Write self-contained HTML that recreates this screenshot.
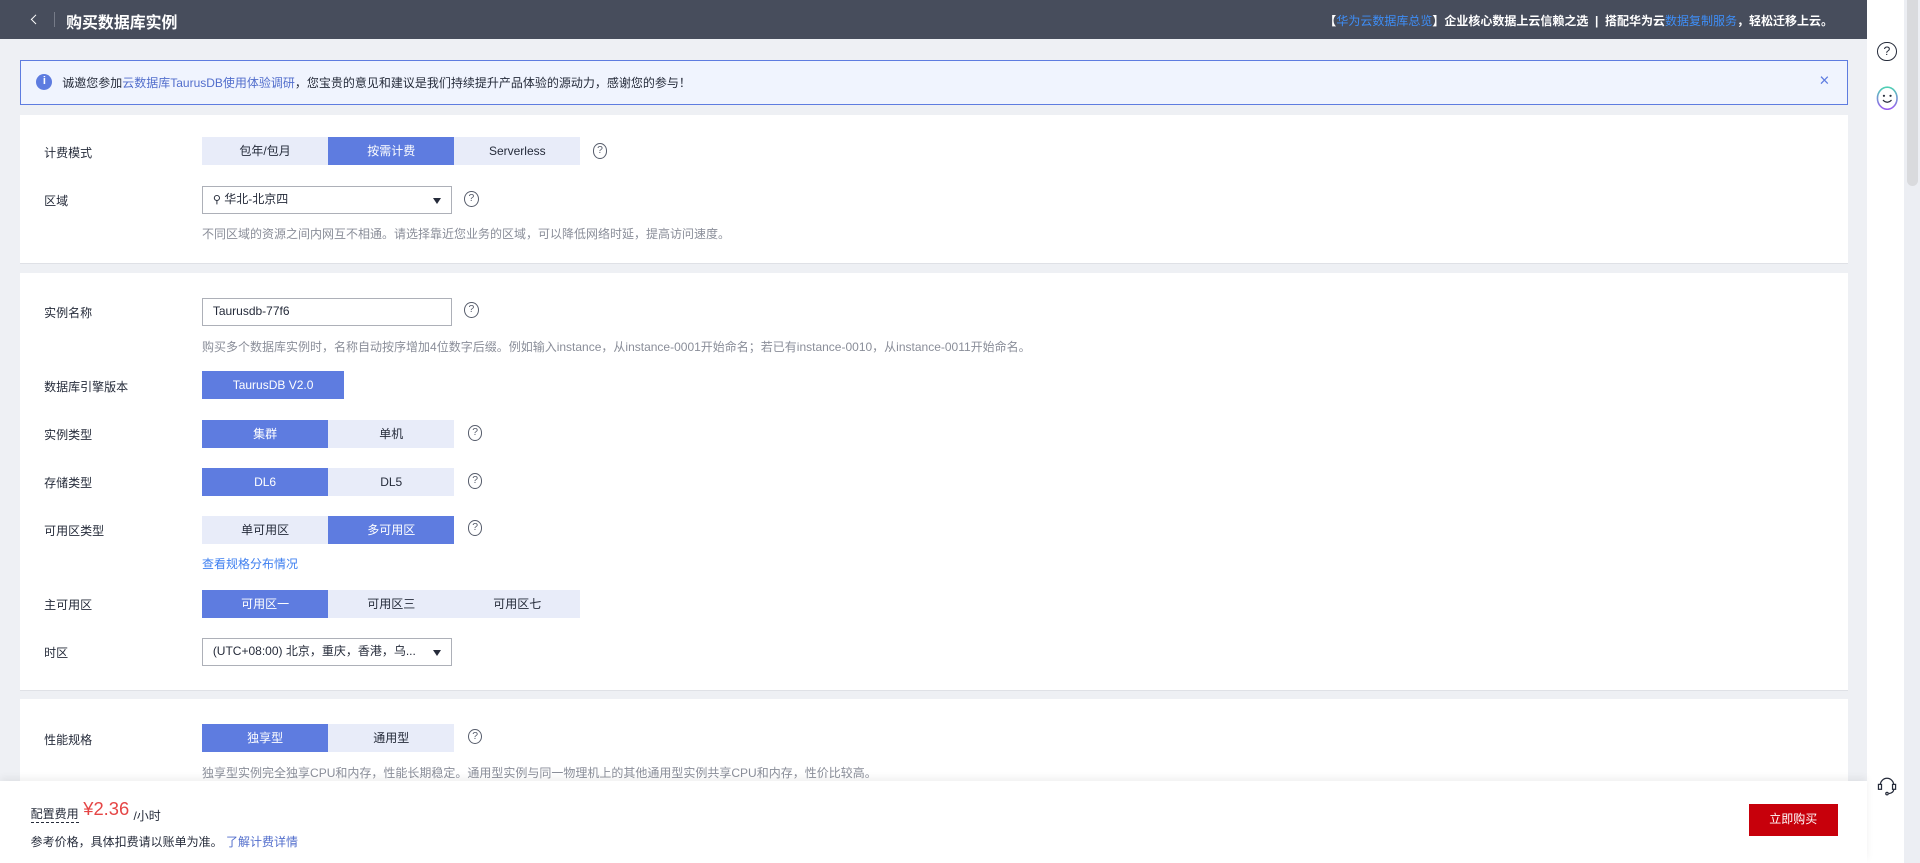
<!DOCTYPE html>
<html><head><meta charset="utf-8"><style>
*{margin:0;padding:0;box-sizing:border-box}
html,body{width:1920px;height:863px;overflow:hidden}
body{background:#eef0f4;font-family:"Liberation Sans","Noto Sans CJK SC",sans-serif;color:#252b3a}
#w{zoom:1.2244898;width:1568px;height:705px;position:relative;overflow:hidden;font-size:9.8px}
.a{position:absolute}
.hdr{left:0;top:0;width:1525px;height:32px;background:#474d5c;color:#fff}
.blue{color:#526ecc}
.lnk{color:#3e8ef7}
.card{left:16px;width:1493px;background:#fff;border-bottom:1px solid #dfe1e6}
.lbl{left:36px;color:#252b3a}
.seg{display:flex;height:23px}
.seg div{width:103px;height:23px;line-height:23px;text-align:center;background:#e8ecf9;color:#252b3a}
.seg div.on{background:#5e7ce0;color:#fff}
.q{width:12px;height:13px;border:1px solid #575d6c;border-radius:50%;font-size:8.5px;line-height:11px;text-align:center;color:#575d6c}
.box{border:1px solid #adb0b8;background:#fff;height:23px;line-height:21px;padding-left:8px}
.hint{left:165px;color:#8a8e99}
.tri{position:absolute;right:8px;top:9px;width:0;height:0;border-left:3.5px solid transparent;border-right:3.5px solid transparent;border-top:5px solid #252b3a}
</style></head><body><div id="w">
<div class="a hdr">
 <div class="a" style="left:26px;top:13px;width:6px;height:6px;border-left:1.2px solid #fff;border-bottom:1.2px solid #fff;transform:rotate(45deg)"></div>
 <div class="a" style="left:44px;top:10px;width:1px;height:12px;background:#767b88"></div>
 <div class="a" style="left:54px;top:8px;font-size:13px;font-weight:bold">购买数据库实例</div>
 <div class="a" style="right:28px;top:10px;font-size:9.8px;font-weight:bold">【<span class="lnk" style="font-weight:normal">华为云数据库总览</span>】企业核心数据上云信赖之选 &nbsp;|&nbsp; 搭配华为云<span class="lnk" style="font-weight:normal">数据复制服务</span>，轻松迁移上云。</div>
</div>
<div class="a" style="left:1525px;top:0;width:30px;height:705px;background:#fff"></div>
<div class="a" style="left:1555px;top:0;width:13px;height:705px;background:#eceef3"></div>
<div class="a" style="left:1557px;top:0;width:9px;height:152px;background:#d9dadd;border-radius:0 0 5px 5px"></div>
<div class="a" style="left:1533px;top:34px;width:16px;height:16px;border:1px solid #252b3a;border-radius:50%;font-size:10px;line-height:14px;text-align:center">?</div>
<svg class="a" style="left:1531px;top:70px" width="20" height="20" viewBox="0 0 20 20" fill="none">
 <defs><linearGradient id="g" x1="0" y1="0" x2="0" y2="1"><stop offset="0" stop-color="#4fd1b4"/><stop offset="1" stop-color="#9a5cf0"/></linearGradient></defs>
 <ellipse cx="10" cy="10" rx="8" ry="9" stroke="url(#g)" stroke-width="1.3"/>
 <circle cx="7.3" cy="8" r="0.9" fill="#252b3a"/><circle cx="12.7" cy="8" r="0.9" fill="#252b3a"/>
 <path d="M6.5 11.5q3.5 3.5 7 0" stroke="#252b3a" stroke-width="1"/>
</svg>
<svg class="a" style="left:1532px;top:632px" width="18" height="18" viewBox="0 0 18 18" fill="none" stroke="#252b3a" stroke-width="1"><path d="M3.5 9a5.5 5.5 0 0 1 11 0"/><rect x="2" y="8.5" width="2.5" height="4"/><rect x="13.5" y="8.5" width="2.5" height="4"/><path d="M14.5 12.5q0 3-4 3.5"/><circle cx="9" cy="16" r="1"/></svg>

<div class="a" style="left:16px;top:49px;width:1493px;height:37px;background:#f0f4fe;border:1px solid #5e7ce0">
 <div class="a" style="left:13px;top:11px;width:13px;height:13px;border-radius:50%;background:#5e7ce0;color:#fff;font-size:9px;line-height:13px;text-align:center;font-weight:bold">i</div>
 <div class="a" style="left:34px;top:11px">诚邀您参加<span class="blue">云数据库TaurusDB使用体验调研</span>，您宝贵的意见和建议是我们持续提升产品体验的源动力，感谢您的参与！</div>
 <div class="a" style="left:1469px;top:7px;font-size:14px;color:#5e7ce0">×</div>
</div>

<div class="a card" style="top:94px;height:122px"></div>
<div class="a lbl" style="top:118px">计费模式</div>
<div class="a seg" style="left:165px;top:112px"><div>包年/包月</div><div class="on">按需计费</div><div>Serverless</div></div>
<div class="a q" style="left:484px;top:117px">?</div>
<div class="a lbl" style="top:157px">区域</div>
<div class="a box" style="left:165px;top:152px;width:204px"><span style="font-size:9px">⚲</span> 华北-北京四<span class="tri"></span></div>
<div class="a q" style="left:379px;top:156px">?</div>
<div class="a hint" style="top:184px">不同区域的资源之间内网互不相通。请选择靠近您业务的区域，可以降低网络时延，提高访问速度。</div>

<div class="a card" style="top:223px;height:341px"></div>
<div class="a lbl" style="top:248px">实例名称</div>
<div class="a box" style="left:165px;top:243px;width:204px">Taurusdb-77f6</div>
<div class="a q" style="left:379px;top:247px">?</div>
<div class="a hint" style="top:276px">购买多个数据库实例时，名称自动按序增加4位数字后缀。例如输入instance，从instance-0001开始命名；若已有instance-0010，从instance-0011开始命名。</div>
<div class="a lbl" style="top:309px">数据库引擎版本</div>
<div class="a seg" style="left:165px;top:303px"><div class="on" style="width:116px">TaurusDB V2.0</div></div>
<div class="a lbl" style="top:348px">实例类型</div>
<div class="a seg" style="left:165px;top:343px"><div class="on">集群</div><div>单机</div></div>
<div class="a q" style="left:382px;top:347px">?</div>
<div class="a lbl" style="top:387px">存储类型</div>
<div class="a seg" style="left:165px;top:382px"><div class="on">DL6</div><div>DL5</div></div>
<div class="a q" style="left:382px;top:386px">?</div>
<div class="a lbl" style="top:426px">可用区类型</div>
<div class="a seg" style="left:165px;top:421px"><div>单可用区</div><div class="on">多可用区</div></div>
<div class="a q" style="left:382px;top:425px">?</div>
<div class="a lnk" style="left:165px;top:453px;color:#3e7ff0">查看规格分布情况</div>
<div class="a lbl" style="top:487px">主可用区</div>
<div class="a seg" style="left:165px;top:482px"><div class="on">可用区一</div><div>可用区三</div><div>可用区七</div></div>
<div class="a lbl" style="top:526px">时区</div>
<div class="a box" style="left:165px;top:521px;width:204px">(UTC+08:00) 北京，重庆，香港，乌...<span class="tri"></span></div>

<div class="a card" style="top:571px;height:140px"></div>
<div class="a lbl" style="top:597px">性能规格</div>
<div class="a seg" style="left:165px;top:591px"><div class="on">独享型</div><div>通用型</div></div>
<div class="a q" style="left:382px;top:595px">?</div>
<div class="a hint" style="top:624px">独享型实例完全独享CPU和内存，性能长期稳定。通用型实例与同一物理机上的其他通用型实例共享CPU和内存，性价比较高。</div>

<div class="a" style="left:0;top:638px;width:1525px;height:67px;background:#fff;box-shadow:0 -3px 6px rgba(0,0,0,.06)">
 <div class="a" style="left:25px;top:21px;border-bottom:1px dashed #252b3a;line-height:12px">配置费用</div>
 <div class="a" style="left:68px;top:14px;color:#e54545;font-size:15px">¥2.36</div>
 <div class="a" style="left:109px;top:21px">/小时</div>
 <div class="a" style="left:25px;top:42px">参考价格，具体扣费请以账单为准。 <span style="color:#526ecc">了解计费详情</span></div>
 <div class="a" style="left:1428px;top:19px;width:73px;height:26px;background:#c7000b;color:#fff;text-align:center;line-height:26px">立即购买</div>
</div>
</div></body></html>
